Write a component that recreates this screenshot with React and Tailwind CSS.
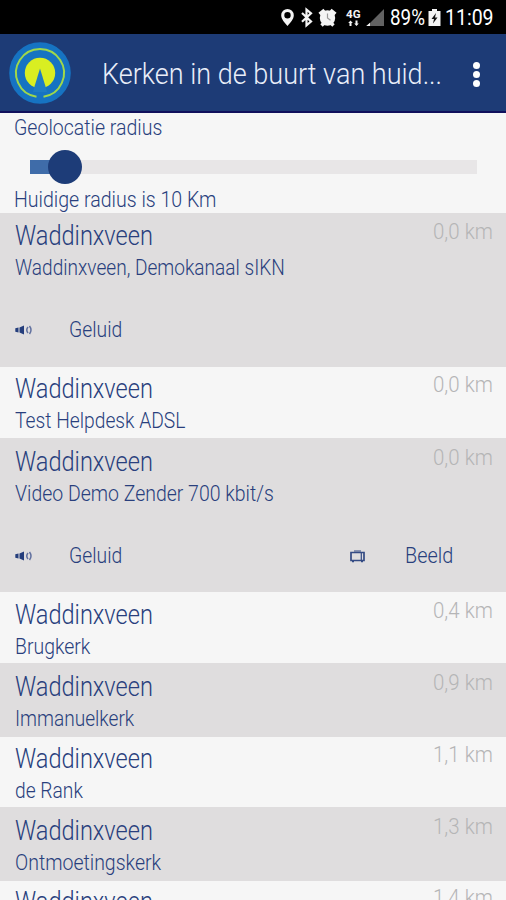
import { useLayoutEffect, useRef, useState } from "react";

// Condensed label: squeezes its text horizontally to the given width.
function Label({ children, width, className = "" }) {
  const ref = useRef(null);
  const [scale, setScale] = useState(1);
  useLayoutEffect(() => {
    const fit = () => {
      if (ref.current) setScale(width / ref.current.offsetWidth);
    };
    fit();
    document.fonts.ready.then(fit);
  }, [width, children]);
  return (
    <span className="block shrink-0" style={{ width }}>
      <span
        ref={ref}
        className={"inline-block origin-left whitespace-nowrap align-top " + className}
        style={{ transform: `scaleX(${scale})` }}
      >
        {children}
      </span>
    </span>
  );
}

const small = "text-[21.5px] leading-[26px] font-light";

const churches = [
  { name: "Waddinxveen, Demokanaal sIKN", w: 270, km: "0,0 km", box: "h-[154px] pt-[7px] bg-[#dfddde]", media: ["sound"] },
  { name: "Test Helpdesk ADSL", w: 170, km: "0,0 km", box: "h-[71px] pt-[6px] bg-[#f6f6f6]" },
  { name: "Video Demo Zender 700 kbit/s", w: 259, km: "0,0 km", box: "h-[154px] pt-[8px] bg-[#dfddde]", media: ["sound", "video"] },
  { name: "Brugkerk", w: 75, km: "0,4 km", box: "h-[71px] pt-[7px] bg-[#f6f6f6]" },
  { name: "Immanuelkerk", w: 119, km: "0,9 km", box: "h-[74px] pt-[8px] bg-[#dfddde]" },
  { name: "de Rank", w: 68, km: "1,1 km", box: "h-[70px] pt-[6px] bg-[#f6f6f6]" },
  { name: "Ontmoetingskerk", w: 146, km: "1,3 km", box: "h-[74px] pt-[8px] bg-[#dfddde]" },
  { km: "1,4 km", box: "h-[71px] pt-[5px] bg-[#f6f6f6]" },
];

function StatusBar() {
  return (
    <div className="flex h-[34px] shrink-0 items-center bg-black pl-[280px] text-white">
      <svg className="h-[34px] w-[108px] shrink-0" viewBox="280 0 108 34" fill="none">
        <path fill="#f4f4f4" fillRule="evenodd" d="M287.500 9a6.300 6.300 0 0 0-6.300 6.300c0 4 3.600 7.500 6.300 10.800 2.700-3.300 6.300-6.800 6.300-10.800A6.300 6.300 0 0 0 287.500 9Zm0 3a3.200 3.200 0 1 1 0 6.400 3.200 3.200 0 0 1 0-6.400Z" />
        <path stroke="#f4f4f4" strokeWidth="2.200" d="m302 13 9 8.500-4.500 3.800V9.500l4.500 3.800-9 8.500" />
        <circle cx="327.500" cy="18" r="7.700" fill="#f4f4f4" />
        <path stroke="#f4f4f4" strokeWidth="3.400" d="m319.500 14 5-4m11 4-5-4M321.500 25.500l3-3m9 3-3-3" />
        <path stroke="#999" strokeWidth="1.200" d="M327.500 13.500V18l3 2.300" />
        <path fill="#f4f4f4" d="M349.500 26v-3h-1.300l2.300-2.600 2.300 2.600h-1.300v3Zm6-5.500h2v3h1.300l-2.300 2.600-2.300-2.600h1.300Z" />
        <text x="346" y="18" fill="#f4f4f4" fontFamily="Roboto, sans-serif" fontWeight="700" fontSize="11.500" textLength="14.500" lengthAdjust="spacingAndGlyphs">4G</text>
        <path fill="#626262" d="M384 9v17h-17Z" />
        <path fill="#f4f4f4" d="M370 22.700V26h-3.800Z" />
      </svg>
      <div className="flex h-[34px] items-start pl-[2px] pt-[5px]">
        <Label width={35} className="text-[21.5px] leading-[26px]">89%</Label>
        <svg className="ml-[3px] mt-[4px] h-[17px] w-[13px]" viewBox="0 0 13 17">
          <path fill="#f4f4f4" d="M4 0h5v2h3.500v15H.500V2H4Z" />
          <path fill="#111" d="M8 4 3.500 10H6l-1 4.500L9.500 8.500H7Z" />
        </svg>
        <span className="w-[4px]" />
        <Label width={49} className="text-[21.5px] leading-[26px]">11:09</Label>
      </div>
    </div>
  );
}

function Header() {
  return (
    <header className="flex h-[79px] shrink-0 items-start border-b-2 border-[#10105c] bg-[#1d3b76]">
      <svg className="ml-[9px] mt-[8px] h-[62px] w-[62px]" viewBox="0 0 62 62">
        <circle cx="31" cy="31" r="30.800" fill="#1673c2" />
        <path d="M27.500 54.700a24 24 0 1 1 7 0" fill="none" stroke="#9fd84b" strokeWidth="2" />
        <circle cx="31" cy="31" r="15.200" fill="#d9ee22" />
        <path d="M31 26.500 25.500 44.500 24 50h14l-1.500-5.500Z" fill="#1f7cc4" />
      </svg>
      <h1 className="ml-[31px] mt-[22px] text-[#e9eef9]">
        <Label width={340} className="text-[29.5px] leading-[36px] font-light">Kerken in de buurt van huid...</Label>
      </h1>
      <div className="ml-[31px] mt-[28px] flex flex-col gap-[2.5px]">
        <i className="size-[6.5px] rounded-full bg-white" />
        <i className="size-[6.5px] rounded-full bg-white" />
        <i className="size-[6.5px] rounded-full bg-white" />
      </div>
    </header>
  );
}

function Radius() {
  return (
    <section className="h-[100px] shrink-0 bg-[#f6f6f6] pl-[14px] pt-[2px]">
      <Label width={148} className={small}>Geolocatie radius</Label>
      <div className="ml-[16px] mt-[8px] flex h-[35px] w-[447px] items-center">
        <div className="h-[14px] w-[20px] bg-[#3f6ca9]" />
        <div className="relative z-10 -ml-[2px] size-[34px] rounded-full bg-[#1d3c78]" />
        <div className="-ml-[2px] h-[14px] flex-1 bg-[#e8e6e7]" />
      </div>
      <div className="mt-[3px]">
        <Label width={202} className={small}>Huidige radius is 10 Km</Label>
      </div>
    </section>
  );
}

function SoundIcon() {
  return (
    <svg className="h-[12px] w-[18px]" viewBox="0 0 18 12">
      <path fill="#253e7c" d="M.300 4.200 3.500 3.500v5L.300 7.800ZM4.500 3.500 9 1.500v9L4.500 8.500Z" />
      <path fill="none" stroke="#6372a0" strokeWidth="1.500" d="M13 3q-2.500 3 0 6M14.500 2q3 4 0 8" />
    </svg>
  );
}

function VideoIcon() {
  return (
    <svg className="h-[13px] w-[15px]" viewBox="0 0 15 13">
      <path fill="none" stroke="#344b84" strokeWidth="1.700" d="M1 2.500h13v8H1Z" />
      <path stroke="#344b84" strokeWidth="1.200" d="M4 1h7M11.300 3v8M2 11.700h2m7 0h2" />
    </svg>
  );
}

function Church({ item }) {
  return (
    <li className={"shrink-0 pl-[15px] " + item.box}>
      <div className="flex h-[32px] items-start">
        <Label width={138} className="text-[27px] leading-[32px] font-light">Waddinxveen</Label>
        <div className="-mt-px ml-[280px] text-[#b5b5b6]">
          <Label width={60} className={small}>{item.km}</Label>
        </div>
      </div>
      {item.name && (
        <div className="mt-[3px]">
          <Label width={item.w} className={small}>{item.name}</Label>
        </div>
      )}
      {item.media && (
        <div className="mt-[36px] flex items-center">
          <SoundIcon />
          <span className="w-[36px]" />
          <Label width={53} className={small}>Geluid</Label>
          {item.media.includes("video") && (
            <>
              <span className="w-[228px]" />
              <VideoIcon />
              <span className="w-[40px]" />
              <Label width={48} className={small}>Beeld</Label>
            </>
          )}
        </div>
      )}
    </li>
  );
}

export default function App() {
  return (
    <main className="flex h-[900px] w-[506px] flex-col overflow-hidden bg-[#f6f6f6] font-['Roboto',sans-serif] text-[#293f7d]">
      <StatusBar />
      <Header />
      <Radius />
      <ul className="flex flex-col">
        {churches.map((item, i) => (
          <Church key={i} item={item} />
        ))}
      </ul>
    </main>
  );
}
